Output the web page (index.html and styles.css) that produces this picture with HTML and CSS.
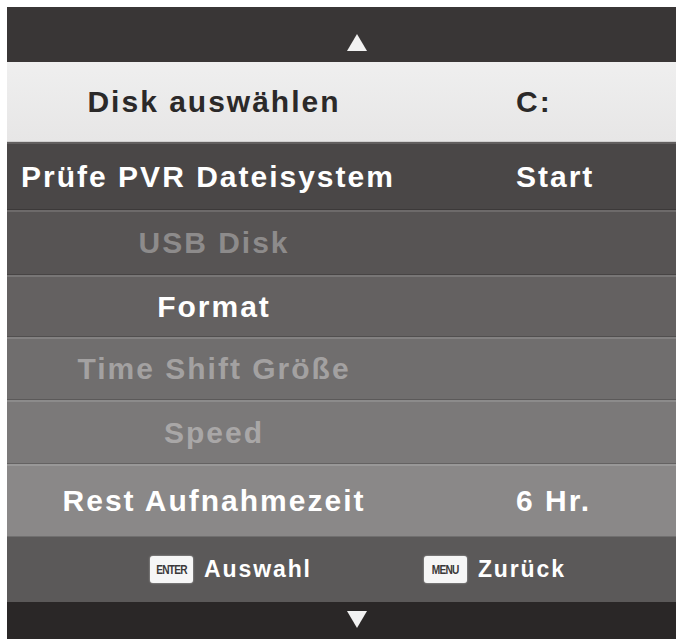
FILE: index.html
```html
<!DOCTYPE html>
<html lang="de">
<head>
<meta charset="utf-8">
<title>PVR Dateisystem</title>
<link rel="stylesheet" href="styles.css">
</head>
<body>
<div class="screen">
  <div class="arrowbar top">
    <svg class="arrow" width="22" height="19" viewBox="0 0 22 19"><polygon points="11,1 21,18 1,18" fill="#f2f2f2"/></svg>
  </div>
  <div class="row selected r1">
    <span class="label">Disk auswählen</span>
    <span class="value">C:</span>
  </div>
  <div class="row r2">
    <span class="label">Prüfe PVR Dateisystem</span>
    <span class="value">Start</span>
  </div>
  <div class="row r3 disabled">
    <span class="label">USB Disk</span>
    <span class="value"></span>
  </div>
  <div class="row r4">
    <span class="label">Format</span>
    <span class="value"></span>
  </div>
  <div class="row r5 disabled">
    <span class="label">Time Shift Größe</span>
    <span class="value"></span>
  </div>
  <div class="row r6 disabled">
    <span class="label">Speed</span>
    <span class="value"></span>
  </div>
  <div class="row r7">
    <span class="label">Rest Aufnahmezeit</span>
    <span class="value">6 Hr.</span>
  </div>
  <div class="footer">
    <div class="hint enter"><span class="key"><span class="key-text">ENTER</span></span><span class="hint-text">Auswahl</span></div>
    <div class="hint menu"><span class="key"><span class="key-text">MENU</span></span><span class="hint-text">Zurück</span></div>
  </div>
  <div class="arrowbar bottom">
    <svg class="arrow" width="22" height="19" viewBox="0 0 22 19"><polygon points="1,1 21,1 11,18" fill="#f2f2f2"/></svg>
  </div>
</div>
</body>
</html>
```

FILE: styles.css
```css
html, body {
  margin: 0;
  padding: 0;
  background: #ffffff;
}

body {
  width: 676px;
  height: 639px;
  overflow: hidden;
  font-family: "Liberation Sans", Arial, sans-serif;
  font-weight: bold;
}

.screen {
  margin: 7px 0 0 7px;
  width: 669px;
  display: flex;
  flex-direction: column;
}

.arrowbar {
  display: flex;
  justify-content: center;
  padding-left: 30px;
}

.arrowbar.top {
  height: 55px;
  background: #393636;
  align-items: flex-end;
  box-sizing: border-box;
  padding-bottom: 10px;
}

.arrowbar.bottom {
  height: 37px;
  background: #2a2727;
  align-items: flex-start;
  box-sizing: border-box;
  padding-top: 8px;
}

.row {
  display: grid;
  grid-template-columns: 414px 1fr;
  align-items: center;
  box-sizing: border-box;
  color: #ffffff;
  font-size: 30px;
  letter-spacing: 2px;
  border-top: 2px solid rgba(255, 255, 255, 0.13);
  border-bottom: 1px solid rgba(0, 0, 0, 0.18);
}

.label {
  text-align: center;
  white-space: nowrap;
}

.r2 .label {
  padding-right: 12px;
}

.value {
  padding-left: 95px;
  white-space: nowrap;
}

.row.selected {
  height: 80px;
  background: linear-gradient(#efefef, #e7e6e6);
  color: #2b2929;
  border-top: none;
  border-bottom: 1px solid #d0cfcf;
}

.r2 { height: 68px; background: #4a4747; }
.r3 { height: 65px; background: #575454; }
.r4 { height: 62px; background: #646161; }
.r5 { height: 63px; background: #706e6e; }
.r6 { height: 64px; background: #7b7979; }
.r7 { height: 73px; background: #8a8888; }

.r3.disabled { color: #8d8b8b; }
.r5.disabled { color: #a3a1a1; }
.r6.disabled { color: #a9a7a7; }

.footer {
  height: 65px;
  background: #5b5959;
  display: flex;
  align-items: center;
  box-sizing: border-box;
  padding-left: 143px;
  color: #ffffff;
  font-size: 23px;
  letter-spacing: 1.9px;
}

.hint {
  display: flex;
  align-items: center;
  gap: 11px;
}

.hint.menu {
  margin-left: 112px;
}

.key {
  display: inline-flex;
  align-items: center;
  justify-content: center;
  width: 43px;
  height: 27px;
  background: #f6f6f6;
  border-radius: 3px;
  color: #3a3838;
  font-size: 13px;
  letter-spacing: -1px;
  font-weight: bold;
  box-shadow: 0 0 2px rgba(255, 255, 255, 0.6);
  overflow: hidden;
}

.key-text {
  display: inline-block;
  transform: scaleX(0.78);
}

.hint-text {
  white-space: nowrap;
}

.arrow {
  display: block;
}
```
